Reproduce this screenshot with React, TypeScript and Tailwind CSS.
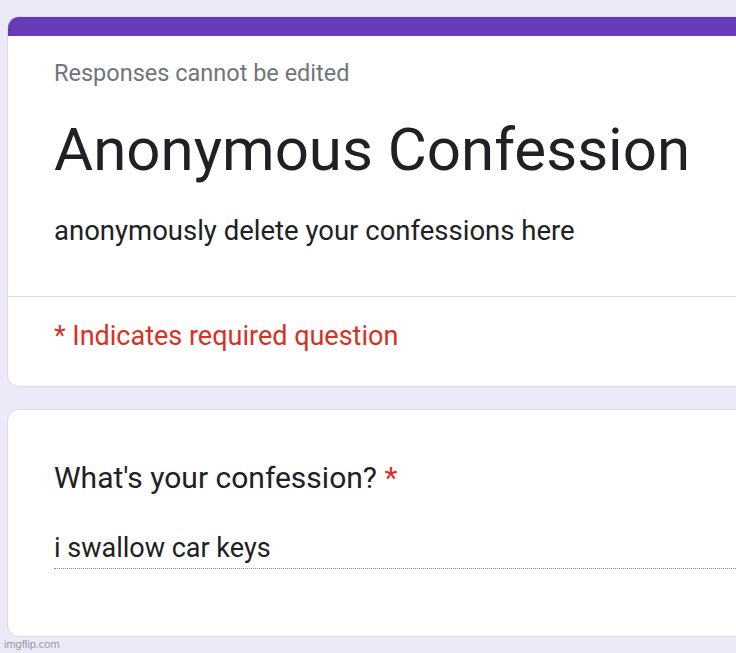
export default function App() {
  return (
    <div
      className="relative w-[736px] h-[653px] overflow-hidden bg-[#ede9f8]"
      style={{ fontFamily: "Roboto, 'Liberation Sans', sans-serif" }}
    >
      <div className="pt-[16px] pl-[7px]">
        <div className="w-[800px] h-[371px] rounded-[12px] border border-[#dadce0] bg-white overflow-hidden">
          <div className="h-[19px] bg-[#673ab7]" />
          <div className="pl-[46px]">
            <div className="pt-[22px] text-[23.5px] leading-[30px] text-[#70757a]">Responses cannot be edited</div>
            <div className="mt-[27px] text-[60px] leading-[70px] text-[#202124]">Anonymous Confession</div>
            <div className="mt-[29px] text-[27.5px] leading-[34px] text-[#202124]">anonymously delete your confessions here</div>
          </div>
          <div className="mt-[48px] border-t border-[#dadce0]" />
          <div className="pl-[46px] pt-[22px] text-[27px] leading-[34px] text-[#d93025]">* Indicates required question</div>
        </div>
        <div className="mt-[22px] w-[800px] h-[228px] rounded-[12px] border border-[#dadce0] bg-white pl-[46px]">
          <div className="pt-[50px] text-[30px] leading-[36px] text-[#202124]">
            What's your confession? <span className="text-[#d93025]">*</span>
          </div>
          <div className="mt-[35px] w-[700px] text-[27px] leading-[34px] text-[#202124] border-b border-dotted border-[#8a8d91] pb-[3px]">
            i swallow car keys
          </div>
        </div>
      </div>
      <div
        className="absolute left-[4px] top-[637px] text-[11px] leading-[14px] text-[#9a97a3]"
        style={{ fontFamily: "'Liberation Sans', Arial, sans-serif" }}
      >
        imgflip.com
      </div>
    </div>
  );
}
